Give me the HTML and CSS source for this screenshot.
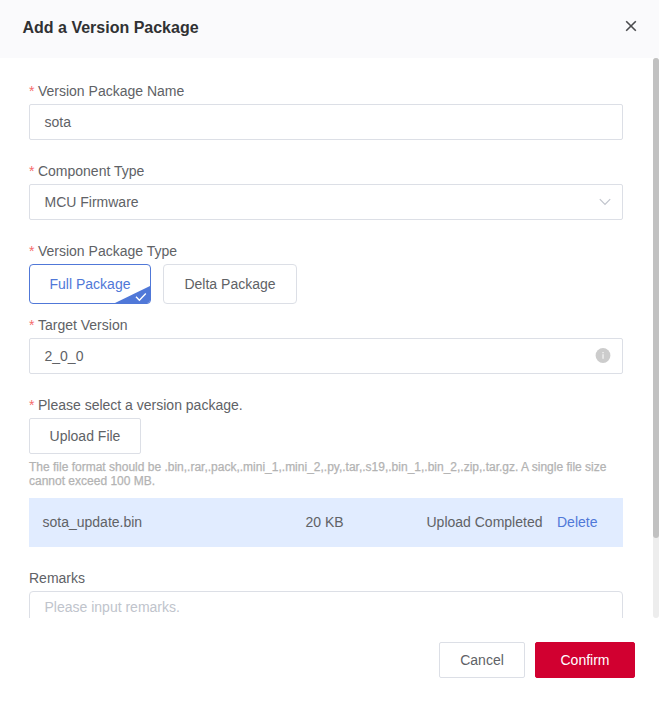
FILE: index.html
```html
<!DOCTYPE html>
<html lang="en">
<head>
<meta charset="utf-8">
<title>Add a Version Package</title>
<link rel="stylesheet" href="styles.css">
</head>
<body>
<div class="dialog">
  <header class="dialog-header">
    <h1 class="title">Add a Version Package</h1>
    <svg class="close" width="12" height="12" viewBox="0 0 12 12"><path d="M1.2 1.2 10.8 10.8M10.8 1.2 1.2 10.8"/></svg>
  </header>
  <div class="dialog-body">
    <form class="form">
      <div class="field">
        <div class="label required">Version Package Name</div>
        <div class="input"><span>sota</span></div>
      </div>
      <div class="field">
        <div class="label required">Component Type</div>
        <div class="input"><span>MCU Firmware</span>
          <svg class="chevron" width="12" height="8" viewBox="0 0 12 8"><path d="M.8 1.2 6 6.4l5.2-5.2"/></svg>
        </div>
      </div>
      <div class="field field-type">
        <div class="label required">Version Package Type</div>
        <div class="options">
          <div class="option selected">Full Package
            <svg class="corner" width="35" height="17" viewBox="0 0 35 17"><path class="corner-fill" d="M0 17 35 0v17z"/><path class="corner-tick" d="M21 10.8l3.4 3.4 6.4-6.6"/></svg>
          </div>
          <div class="option">Delta Package</div>
        </div>
      </div>
      <div class="field">
        <div class="label required">Target Version</div>
        <div class="input"><span>2_0_0</span>
          <svg class="info" width="16" height="16" viewBox="0 0 16 16"><circle cx="8" cy="7.5" r="7.4"/><path d="M7.3 4h1.5v1.2H7.3zM7.3 6.2h1.5v4.6H7.3z"/></svg>
        </div>
      </div>
      <div class="field field-upload">
        <div class="label required">Please select a version package.</div>
        <div class="button upload">Upload File</div>
        <p class="hint">The file format should be .bin,.rar,.pack,.mini_1,.mini_2,.py,.tar,.s19,.bin_1,.bin_2,.zip,.tar.gz. A single file size cannot exceed 100 MB.</p>
        <div class="file">
          <span class="file-name">sota_update.bin</span>
          <span class="file-size">20 KB</span>
          <span class="file-status">Upload Completed</span>
          <span class="file-delete">Delete</span>
        </div>
      </div>
      <div class="field">
        <div class="label">Remarks</div>
        <div class="textarea">Please input remarks.</div>
      </div>
    </form>
    <div class="scrollbar"><div class="thumb"></div></div>
  </div>
  <footer class="dialog-footer">
    <div class="button cancel">Cancel</div>
    <div class="button confirm">Confirm</div>
  </footer>
</div>
</body>
</html>
```
FILE: styles.css
```css
* { box-sizing: border-box; }
body {
  margin: 0;
  background: #fff;
  color: #606266;
  font: 14px/20px "Liberation Sans", Arial, sans-serif;
}
.dialog { display: flex; flex-direction: column; height: 701px; overflow: hidden; }
.dialog-header {
  display: flex;
  flex: none;
  align-items: center;
  justify-content: space-between;
  height: 58px;
  padding: 0 22.5px 2px;
  background: #fafafc;
}
.title { margin: 0; color: #303133; font-size: 16px; line-height: 24px; }
.close { fill: none; stroke: #4a4b4e; stroke-width: 1.6; margin-bottom: 4px; }
.dialog-body { display: flex; flex: none; height: 560px; overflow: hidden; }
.form { width: 594px; margin: 0 30px 0 29px; padding-top: 23px; }
.field { margin-bottom: 21px; }
.field-type { margin-bottom: 11px; }
.label { height: 20px; margin-bottom: 3px; white-space: nowrap; }
.required::before { content: "*"; margin-right: 3.5px; color: #f56c6c; }
.input {
  display: flex;
  align-items: center;
  justify-content: space-between;
  height: 36px;
  padding: 0 11px 0 14.5px;
  border: 1px solid #dcdfe6;
  border-radius: 2px;
}
.chevron { fill: none; stroke: #c0c4cc; stroke-width: 1.2; }
.info { fill: #ccc; }
.info path { fill: #eee; }
.options { display: flex; gap: 12px; }
.option {
  position: relative;
  width: 134px;
  height: 40px;
  border: 1px solid #dcdfe6;
  border-radius: 4px;
  line-height: 38px;
  text-align: center;
}
.selected { width: 122px; border-color: #5078d8; color: #5078d8; overflow: hidden; }
.corner { position: absolute; right: 0; bottom: 0; }
.corner-fill { fill: #5078d8; }
.corner-tick { fill: none; stroke: #fff; stroke-width: 1.4; }
.button {
  height: 36px;
  border: 1px solid #dcdfe6;
  border-radius: 2px;
  line-height: 34px;
  text-align: center;
}
.upload { width: 112px; }
.hint { margin: 6px 0 10px; color: #b3b3b3; font-size: 12px; line-height: 14px; -webkit-text-stroke: .25px #b3b3b3; }
.file {
  display: grid;
  grid-template-columns: 263px 121px 130.5px auto;
  align-items: center;
  height: 49px;
  padding: 0 0 2px 13.5px;
  background: #e1ecff;
}
.file-delete { color: #5078d8; }
.textarea {
  height: 76px;
  padding: 5px 14.5px;
  border: 1px solid #dcdfe6;
  border-radius: 4px;
  color: #c0c4cc;
}
.scrollbar { width: 6px; height: 560px; border-radius: 3px; background: #ededed; }
.thumb { height: 480px; border-radius: 3px; background: #c1c1c1; }
.dialog-footer { display: flex; justify-content: flex-end; gap: 10px; padding: 24px 24px 0 0; }
.cancel { width: 86px; }
.confirm { width: 100px; border-color: #d10030; background: #d10030; color: #fff; }
```
